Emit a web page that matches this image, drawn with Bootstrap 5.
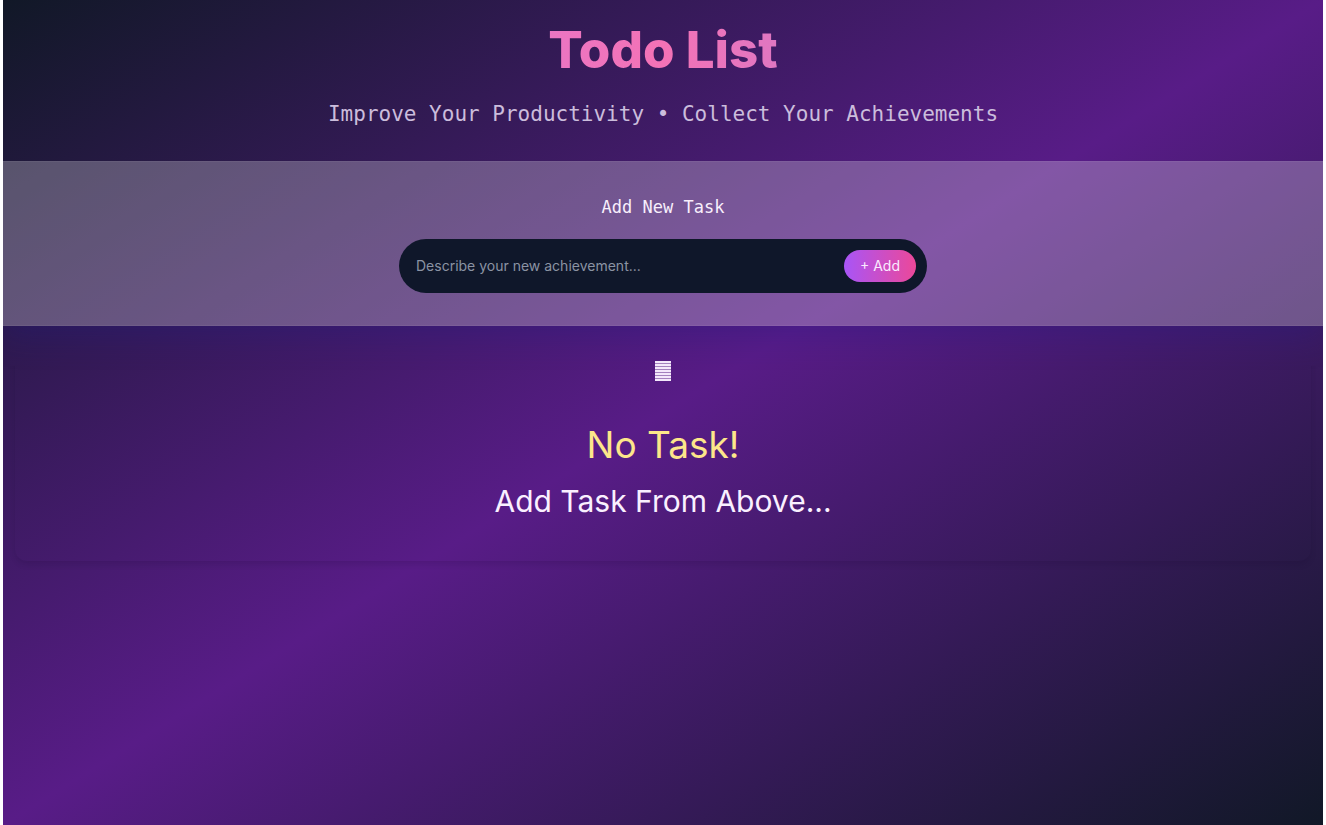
<!DOCTYPE html>
<html lang="en">
<head>
<meta charset="utf-8">
<meta name="viewport" content="width=device-width, initial-scale=1">
<title>Todo List</title>
<link href="https://cdn.jsdelivr.net/npm/bootstrap@5.3.0/dist/css/bootstrap.min.css" rel="stylesheet">
<style>
body { background: #fff; font-family: Inter, "Liberation Sans", sans-serif; padding: 0 3px; }
.app-shell { background: linear-gradient(to bottom right, #111827, #581c87, #111827); }
.app-header { padding: 20px 16px 31px; }
.app-title {
  font-size: 51px; line-height: 60px; font-weight: 800; margin-bottom: 18px;
  background: linear-gradient(to right, #c084fc, #f472b6, #818cf8);
  -webkit-background-clip: text; background-clip: text; color: transparent;
}
.mono-text { font-family: "DejaVu Sans Mono", "Liberation Mono", monospace; }
.app-tagline { font-size: 21px; line-height: 32px; color: #cbbddc; }
.add-band {
  padding: 33px 0 32px;
  background: rgba(255, 255, 255, .26);
  border-top: 1px solid rgba(255, 255, 255, .05);
  border-bottom: 1px solid rgba(255, 255, 255, .05);
  box-shadow: 0 10px 30px rgba(30, 27, 140, .3);
  clip-path: inset(0 0 -48px 0);
}
.add-label { font-size: 17px; line-height: 24px; color: #f8effc; }
.task-box { width: 40%; min-width: 300px; padding: 11px 11px 11px 17px; background: #0f172a; }
.task-input { font-size: 14px; line-height: 20px; color: #f3e8ff; }
.task-input::placeholder { color: #8b93a3; opacity: 1; }
.add-btn {
  font-size: 14px; line-height: 20px; padding: 6px 16px; color: #faeaff;
  background: linear-gradient(to right, #a855f7, #ec4899);
}
.empty-card { margin: 0 12px; padding: 24px 16px 40px; color: #faf0ff; }
.empty-shadow { border-radius: 12px; box-shadow: 0 4px 6px -1px rgba(20, 0, 40, .15); clip-path: inset(40px -12px -16px -12px); }
.empty-title { font-size: 37px; line-height: 48px; font-weight: 400; color: #fde68a; margin: 37px 0 12px; }
.empty-text { font-size: 30px; line-height: 40px; }
</style>
</head>
<body>
<div class="app-shell min-vh-100">
  <header class="app-header text-center">
    <h1 class="app-title">Todo List</h1>
    <p class="app-tagline mono-text mb-0">Improve Your Productivity • Collect Your Achievements</p>
  </header>
  <main>
    <form class="add-band d-flex flex-column align-items-center" onsubmit="return false">
      <label class="add-label mono-text mb-3 pb-1" for="task">Add New Task</label>
      <div class="task-box d-flex align-items-center rounded-pill">
        <input id="task" class="task-input form-control-plaintext flex-grow-1 p-0" type="text" placeholder="Describe your new achievement...">
        <button class="add-btn btn border-0 rounded-pill flex-shrink-0" type="submit">+ Add</button>
      </div>
    </form>
    <section class="empty-card text-center position-relative">
      <svg class="d-block mx-auto mt-2" width="16" height="26" viewBox="0 0 16 26" aria-hidden="true">
        <path fill="#f3e8fb" d="M0 3h16v2H0zM0 6h16v2H0zM0 9h16v2H0zM0 12h16v2H0zM0 15h16v2H0zM0 18h16v2H0zM0 21h16v2H0z"/>
        <path fill="#f3e8fb" fill-opacity=".5" d="M0 3h16v20H0z"/>
      </svg>
      <h2 class="empty-title">No Task!</h2>
      <p class="empty-text mb-0">Add Task From Above...</p>
      <div class="empty-shadow position-absolute top-0 start-0 w-100 h-100 pe-none"></div>
    </section>
  </main>
</div>
<script src="https://cdn.jsdelivr.net/npm/bootstrap@5.3.0/dist/js/bootstrap.bundle.min.js"></script>
</body>
</html>
